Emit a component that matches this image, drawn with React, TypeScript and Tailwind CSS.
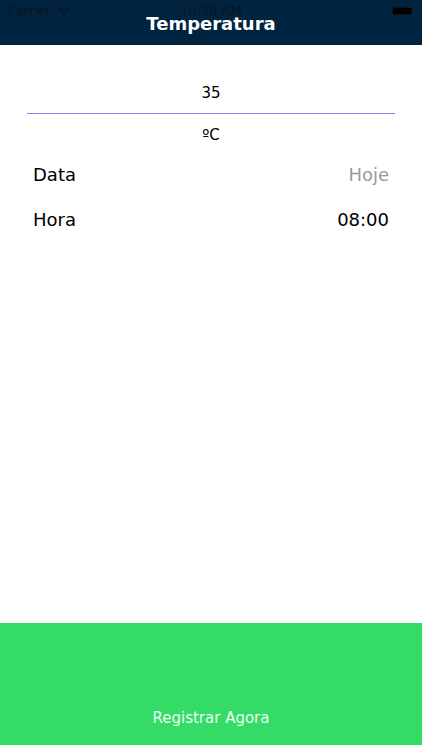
export default function App() {
  return (
    <div
      className="relative flex h-[750px] w-[422px] flex-col overflow-hidden bg-white"
      style={{ fontFamily: '"DejaVu Sans", Verdana, sans-serif' }}
    >
      {/* nav bar with status bar */}
      <div className="relative h-[45px] shrink-0 bg-[#00233f]">
        <div className="absolute left-0 right-0 top-[2px] flex h-[18px] items-center px-[7px] text-[13px] leading-[16px] text-[#0a1622]">
          <span>Carrier</span>
          <svg className="ml-[6px]" width="14" height="10" viewBox="0 0 14 10">
            <path d="M7 10 L4.6 7.4 A3.4 3.4 0 0 1 9.4 7.4 Z" fill="#0a1622" />
            <path d="M2.9 5.6 A5.9 5.9 0 0 1 11.1 5.6 L10.1 6.6 A4.5 4.5 0 0 0 3.9 6.6 Z" fill="#0a1622" />
            <path d="M1 3.7 A8.5 8.5 0 0 1 13 3.7 L12 4.7 A7.1 7.1 0 0 0 2 4.7 Z" fill="#0a1622" />
          </svg>
          <span className="absolute left-0 right-0 text-center">10:38 AM</span>
          <div className="ml-auto mr-[2px] flex items-center">
            <div className="h-[8px] w-[20px] rounded-[2px] border border-[#0a1622] bg-[#000]" />
            <div className="h-[3px] w-[1px] bg-[#0a1622]" />
          </div>
        </div>
        <div className="absolute left-0 right-0 top-[13px] text-center text-[18px] font-bold leading-[22px] text-white">
          Temperatura
        </div>
      </div>

      {/* temperature input */}
      <div className="flex flex-col items-center pt-[38px]">
        <div className="text-[15px] leading-[20px] text-black">35</div>
        <div className="mt-[10px] h-[1px] w-[368px] bg-[#8484ee]" />
        <div className="mt-[11px] text-[15px] leading-[20px] text-black">ºC</div>
      </div>

      {/* rows */}
      <div className="flex flex-col px-[33px] pt-[18px] text-[18px] leading-[24px]">
        <div className="flex items-center justify-between">
          <span className="text-black">Data</span>
          <span className="text-[#9a9a9a]">Hoje</span>
        </div>
        <div className="mt-[21px] flex items-center justify-between">
          <span className="text-black">Hora</span>
          <span className="text-black">08:00</span>
        </div>
      </div>

      <div className="flex-1" />

      {/* register button */}
      <button className="mb-[5px] flex h-[122px] w-full shrink-0 items-end justify-center bg-[#34db66] pb-[17px] text-[15px] leading-[20px] text-[#ecfff2]">
        Registrar Agora
      </button>
    </div>
  );
}
